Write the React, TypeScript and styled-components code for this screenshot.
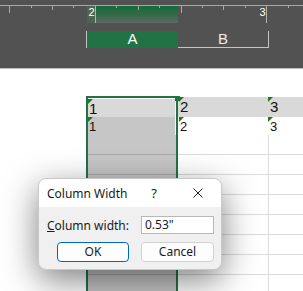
import styled, { createGlobalStyle } from "styled-components";

const GlobalStyle = createGlobalStyle`
  html, body {
    margin: 0;
    padding: 0;
    background: #ffffff;
  }
  body {
    width: 303px;
    height: 291px;
    overflow: hidden;
    font-family: "Liberation Sans", Arial, sans-serif;
  }
`;

// ruler ticks: x, length
const ticks: [number, number][] = [
  [9.5, 7],
  [31.5, 2],
  [52.5, 4],
  [73.5, 2],
  [116.5, 2],
  [138.5, 4],
  [159.5, 2],
  [181.5, 7],
  [202.5, 2],
  [223.5, 4],
  [245.5, 2],
  [288.5, 2],
];

const Ruler = () => (
  <svg width="303" height="24" style={{ display: "block" }}>
    <defs>
      <linearGradient id="sel" x1="0" y1="0" x2="0" y2="1">
        <stop offset="0" stopColor="#156a3a" />
        <stop offset="0.45" stopColor="#2f6a47" />
        <stop offset="1" stopColor="#5e6761" />
      </linearGradient>
    </defs>
    <rect x="87" y="6" width="91" height="17" fill="url(#sel)" />
    <rect x="87" y="6" width="8" height="17" fill="#4b6656" />
    <line x1="0" y1="5.5" x2="303" y2="5.5" stroke="#a9a9a9" />
    {ticks.map(([x, l]) => (
      <line key={x} x1={x} y1="6" x2={x} y2={6 + l} stroke="#a9a9a9" />
    ))}
    <line x1="95.5" y1="6" x2="95.5" y2="23" stroke="#b4b4b4" />
    <line x1="266.5" y1="6" x2="266.5" y2="23" stroke="#b4b4b4" />
    <text x="88.5" y="16" fontSize="11" fill="#ffffff" fontFamily="Liberation Sans, Arial, sans-serif">2</text>
    <text x="259.5" y="16" fontSize="11" fill="#ffffff" fontFamily="Liberation Sans, Arial, sans-serif">3</text>
  </svg>
);

const CloseIcon = () => (
  <svg width="10" height="10" viewBox="0 0 10 10" style={{ display: "block" }}>
    <path d="M0.5 0.5 L9.5 9.5 M9.5 0.5 L0.5 9.5" stroke="#1f1f1f" strokeWidth="1" fill="none" />
  </svg>
);

export default function App() {
  return (
    <Page>
      <GlobalStyle />
      <TopBar>
        <Ruler />
        <HeaderRow>
          <Spacer />
          <HeaderCell $active>A</HeaderCell>
          <HeaderCell>B</HeaderCell>
        </HeaderRow>
      </TopBar>

      <Sheet>
        <Spacer />
        <ColumnA>
          <ActiveCell $h={19} $top>
            <Value $size={15}>1</Value>
          </ActiveCell>
          <ActiveCell $h={18} $dark>
            <Value $size={13}>1</Value>
          </ActiveCell>
          {Array.from({ length: 8 }).map((_, i) => (
            <SelRow key={i} />
          ))}
        </ColumnA>
        <Rest>
          <BandRow $h={20} $band>
            <Cell $w={90}>
              <Value $size={15}>2</Value>
            </Cell>
            <Cell $w={0}>
              <Value $size={15}>3</Value>
            </Cell>
          </BandRow>
          <BandRow $h={18}>
            <Cell $w={90}>
              <Value $size={13}>2</Value>
            </Cell>
            <Cell $w={0}>
              <Value $size={13}>3</Value>
            </Cell>
          </BandRow>
          {Array.from({ length: 8 }).map((_, i) => (
            <GridRow key={i}>
              <EmptyCell $w={90} />
              <EmptyCell $w={0} $lined />
            </GridRow>
          ))}
        </Rest>
      </Sheet>

      <FillHandle />

      <Dialog>
        <TitleBar>
          <Title>Column Width</Title>
          <Help>?</Help>
          <CloseIcon />
        </TitleBar>
        <Body>
          <FieldRow>
            <Label>
              <u>C</u>olumn width:
            </Label>
            <Input>0.53"</Input>
          </FieldRow>
          <Buttons>
            <Button $primary $w={72}>OK</Button>
            <Button $w={73}>Cancel</Button>
          </Buttons>
        </Body>
      </Dialog>
    </Page>
  );
}

const Page = styled.div`
  position: relative;
  width: 303px;
  height: 291px;
  overflow: hidden;
  background: #ffffff;
`;

const TopBar = styled.div`
  height: 68px;
  background: #525252;
  border-bottom: 1px solid #bdbdbd;
`;

const HeaderRow = styled.div`
  display: flex;
  margin-top: 7px;
  height: 17px;
`;

const Spacer = styled.div`
  width: 86px;
  flex: none;
`;

const HeaderCell = styled.div<{ $active?: boolean }>`
  box-sizing: border-box;
  width: ${(p) => (p.$active ? 92 : 91)}px;
  height: 17px;
  background: ${(p) => (p.$active ? "#217346" : "transparent")};
  border-left: ${(p) => (p.$active ? "1px solid #c4c4c4" : "none")};
  border-right: ${(p) => (p.$active ? "none" : "1px solid #c4c4c4")};
  border-bottom: ${(p) => (p.$active ? "none" : "1px solid #c4c4c4")};
  color: ${(p) => (p.$active ? "#ffffff" : "#ececec")};
  font-size: 15px;
  line-height: 16px;
  text-align: center;
`;

const Sheet = styled.div`
  display: flex;
  padding-top: 27px;
`;

const ColumnA = styled.div`
  box-sizing: border-box;
  width: 92px;
  flex: none;
  display: flex;
  flex-direction: column;
  border: 2px solid #217346;
  border-bottom: none;
  background: #c6c6c6;
`;

const Value = styled.span<{ $size: number }>`
  position: relative;
  padding-left: 1px;
  font-size: ${(p) => p.$size}px;
  color: #111111;
`;

const marker = `
  &::before {
    content: "";
    position: absolute;
    left: 0;
    top: 0;
    border-top: 5px solid #1d7a1d;
    border-right: 5px solid transparent;
  }
`;

const ActiveCell = styled.div<{ $h: number; $top?: boolean; $dark?: boolean }>`
  position: relative;
  box-sizing: border-box;
  height: ${(p) => p.$h}px;
  line-height: ${(p) => p.$h}px;
  background: ${(p) => (p.$dark ? "#c6c6c6" : "#d9d9d9")};
  border-top: ${(p) => (p.$top ? "1px solid #ffffff" : "none")};
  border-right: 1px solid #f4f4f4;
  ${marker}
`;

const SelRow = styled.div`
  box-sizing: border-box;
  height: 20px;
  flex: none;
  border-bottom: 1px solid #a9a9a9;
`;

const Rest = styled.div`
  flex: 1;
  margin-top: 1px;
  display: flex;
  flex-direction: column;
`;

const BandRow = styled.div<{ $h: number; $band?: boolean }>`
  display: flex;
  height: ${(p) => p.$h}px;
  line-height: ${(p) => p.$h}px;
  background: ${(p) => (p.$band ? "#d9d9d9" : "#ffffff")};
`;

const Cell = styled.div<{ $w: number }>`
  position: relative;
  box-sizing: border-box;
  ${(p) => (p.$w ? `width: ${p.$w}px; flex: none;` : "flex: 1;")}
  padding-left: 1px;
  ${marker}
  &:first-child::before {
    left: 1px;
  }
`;

const GridRow = styled.div`
  display: flex;
  box-sizing: border-box;
  height: 20px;
  flex: none;
  border-bottom: 1px solid #dcdcdc;
`;

const EmptyCell = styled.div<{ $w: number; $lined?: boolean }>`
  ${(p) => (p.$w ? `width: ${p.$w}px; flex: none;` : "flex: 1;")}
  border-left: ${(p) => (p.$lined ? "1px solid #dcdcdc" : "none")};
`;

const FillHandle = styled.div`
  position: absolute;
  left: 175px;
  top: 96px;
  width: 5px;
  height: 5px;
  background: #217346;
`;

const Dialog = styled.div`
  position: absolute;
  left: 38px;
  top: 178px;
  width: 184px;
  height: 92px;
  box-sizing: border-box;
  border: 1px solid #c9c9c9;
  border-radius: 8px;
  overflow: hidden;
  background: #f0f0f0;
  box-shadow: 0 10px 34px rgba(0, 0, 0, 0.5);
  font-family: "Noto Sans", "Open Sans", sans-serif;
  font-size: 12px;
  color: #1a1a1a;
`;

const TitleBar = styled.div`
  display: flex;
  align-items: center;
  height: 28px;
  padding: 0 18px 0 8px;
  background: #ffffff;
`;

const Title = styled.div`
  flex: 1;
`;

const Help = styled.div`
  width: 20px;
  margin-right: 29px;
  text-align: center;
  font-size: 13px;
`;

const Body = styled.div`
  padding: 9px 7px 0 8px;
`;

const FieldRow = styled.div`
  display: flex;
  align-items: center;
  justify-content: space-between;
  height: 18px;
`;

const Label = styled.div`
  white-space: nowrap;
`;

const Input = styled.div`
  box-sizing: border-box;
  width: 73px;
  height: 18px;
  padding-left: 3px;
  line-height: 16px;
  background: #ffffff;
  border: 1px solid #b8b8b8;
`;

const Buttons = styled.div`
  display: flex;
  justify-content: flex-end;
  gap: 12px;
  margin-top: 8px;
`;

const Button = styled.div<{ $primary?: boolean; $w: number }>`
  box-sizing: border-box;
  width: ${(p) => p.$w}px;
  height: 20px;
  line-height: 18px;
  text-align: center;
  background: #fdfdfd;
  border: 1px solid ${(p) => (p.$primary ? "#0067c0" : "#d1d1d1")};
  border-radius: 4px;
`;
